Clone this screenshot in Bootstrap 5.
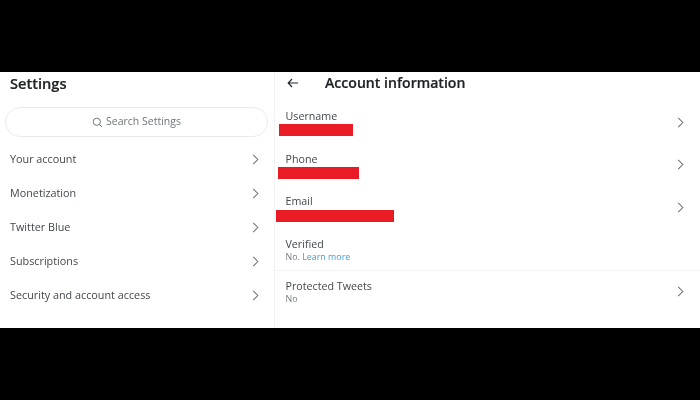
<!DOCTYPE html>
<html lang="en">
<head>
<meta charset="utf-8">
<title>Account information</title>
<link rel="stylesheet" href="https://cdn.jsdelivr.net/npm/bootstrap@5.3.0/dist/css/bootstrap.min.css">
<style>
html,body{height:400px;margin:0;overflow:hidden;background:#000;}
body{font-family:"Open Sans","Liberation Sans",sans-serif;color:#43484d;}
.shot{height:400px;padding:72px 0;}
.sheet{height:256px;background:#fff;filter:blur(.35px);}
.left-pane{width:274px;padding:0 6px 0 5px;}
.right-pane{border-left:1px solid #f1f2f3;}
.pane-title{font-size:14.1px;font-weight:600;color:#202326;line-height:22px;-webkit-text-stroke:.2px #202326;}
.left-head{height:22px;padding-left:5px;margin-bottom:13px;font-size:14.6px;}
.search-pill{height:30px;border:1px solid #e9ebed;border-radius:15px;font-size:10.5px;color:#6f757b;gap:3px;margin-bottom:5.4px;}
.menu-row{height:34px;font-size:10.8px;padding:0 9px 0 5px;}
.right-head{height:29px;padding:0 0 7px 12px;gap:26px;}
.info-row{height:42.5px;padding:0 16px 0 10.5px;font-size:10.7px;}
.info-row.ruled{border-top:1px solid #f3f4f5;margin-top:-1px;}
.row-lift{transform:translateY(-6px);}
.row-sub{font-size:8.9px;color:#777d83;line-height:12px;}
.row-name{line-height:14px;}
.learn{color:#3f9fdc;text-decoration:none;}
.redact{position:absolute;background:#e91c25;height:12px;}
.redact-a{left:4px;top:23px;width:74px;}
.redact-b{left:3px;top:23px;width:81px;}
.redact-c{left:1px;top:24px;width:118px;}
.chev{flex:none;}
</style>
</head>
<body>
<div class="shot">
<div class="sheet d-flex">
  <div class="left-pane flex-shrink-0">
    <div class="pane-title left-head">Settings</div>
    <div class="search-pill d-flex align-items-center justify-content-center">
      <svg width="11" height="11" viewBox="0 0 11 11" fill="none" stroke="#6f757b" stroke-width="1"><circle cx="4.8" cy="4.8" r="3.6"/><path d="M7.4 7.4 10 10"/></svg>
      <span>Search Settings</span>
    </div>
    <div class="menu-row d-flex align-items-center justify-content-between"><span>Your account</span><svg class="chev" width="7" height="11" viewBox="0 0 7 12" fill="none" stroke="#6a6f74" stroke-width="1.1"><path d="M1 1l5 5-5 5"/></svg></div>
    <div class="menu-row d-flex align-items-center justify-content-between"><span>Monetization</span><svg class="chev" width="7" height="11" viewBox="0 0 7 12" fill="none" stroke="#6a6f74" stroke-width="1.1"><path d="M1 1l5 5-5 5"/></svg></div>
    <div class="menu-row d-flex align-items-center justify-content-between"><span>Twitter Blue</span><svg class="chev" width="7" height="11" viewBox="0 0 7 12" fill="none" stroke="#6a6f74" stroke-width="1.1"><path d="M1 1l5 5-5 5"/></svg></div>
    <div class="menu-row d-flex align-items-center justify-content-between"><span>Subscriptions</span><svg class="chev" width="7" height="11" viewBox="0 0 7 12" fill="none" stroke="#6a6f74" stroke-width="1.1"><path d="M1 1l5 5-5 5"/></svg></div>
    <div class="menu-row d-flex align-items-center justify-content-between"><span>Security and account access</span><svg class="chev" width="7" height="11" viewBox="0 0 7 12" fill="none" stroke="#6a6f74" stroke-width="1.1"><path d="M1 1l5 5-5 5"/></svg></div>
  </div>
  <div class="right-pane flex-grow-1">
    <div class="right-head d-flex align-items-center pane-title">
      <svg width="12" height="10" viewBox="0 0 12 10" fill="none" stroke="#26292c" stroke-width="1.2"><path d="M11 5H1.5M5 1 1.2 5 5 9"/></svg>
      <span>Account information</span>
    </div>
    <div class="info-row d-flex align-items-center justify-content-between position-relative"><span class="row-name row-lift">Username</span><span class="redact redact-a"></span><svg class="chev" width="7" height="11" viewBox="0 0 7 12" fill="none" stroke="#6a6f74" stroke-width="1.1"><path d="M1 1l5 5-5 5"/></svg></div>
    <div class="info-row d-flex align-items-center justify-content-between position-relative"><span class="row-name row-lift">Phone</span><span class="redact redact-b"></span><svg class="chev" width="7" height="11" viewBox="0 0 7 12" fill="none" stroke="#6a6f74" stroke-width="1.1"><path d="M1 1l5 5-5 5"/></svg></div>
    <div class="info-row d-flex align-items-center justify-content-between position-relative"><span class="row-name row-lift">Email</span><span class="redact redact-c"></span><svg class="chev" width="7" height="11" viewBox="0 0 7 12" fill="none" stroke="#6a6f74" stroke-width="1.1"><path d="M1 1l5 5-5 5"/></svg></div>
    <div class="info-row d-flex align-items-center"><div><div class="row-name">Verified</div><div class="row-sub">No. <a class="learn" href="#">Learn more</a></div></div></div>
    <div class="info-row ruled d-flex align-items-center justify-content-between"><div><div class="row-name">Protected Tweets</div><div class="row-sub">No</div></div><svg class="chev" width="7" height="11" viewBox="0 0 7 12" fill="none" stroke="#6a6f74" stroke-width="1.1"><path d="M1 1l5 5-5 5"/></svg></div>
  </div>
</div>
</div>
<script src="https://cdn.jsdelivr.net/npm/bootstrap@5.3.0/dist/js/bootstrap.bundle.min.js"></script>
</body>
</html>
